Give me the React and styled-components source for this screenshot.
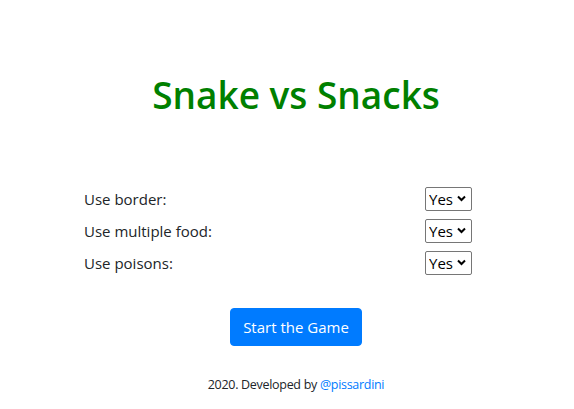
import React from "react";
import styled, { createGlobalStyle } from "styled-components";

const Global = createGlobalStyle`
  html, body { margin: 0; padding: 0; background: #fff; }
  body {
    font-family: "Open Sans", "Noto Sans", sans-serif;
    color: #212529;
    font-size: 16px;
    line-height: 1.5;
  }
`;

const Page = styled.div`
  width: 574px;
  height: 409px;
  display: flex;
  flex-direction: column;
  padding-left: 18px;
  box-sizing: border-box;
`;

const Title = styled.h1`
  margin: 71px 0 0;
  text-align: center;
  color: #008000;
  font-size: 37px;
  font-weight: 600;
  line-height: 48px;
`;

const Form = styled.div`
  margin: 64px 0 0 66px;
  width: 388px;
  display: flex;
  flex-direction: column;
`;

const Row = styled.div`
  height: 32px;
  display: flex;
  align-items: center;
  justify-content: space-between;
`;

const Label = styled.label`
  font-size: 15px;
`;

const SelectWrap = styled.span`
  position: relative;
  display: inline-flex;
`;

const Select = styled.select`
  appearance: none;
  -webkit-appearance: none;
  width: 47px;
  height: 24px;
  box-sizing: border-box;
  border: 1px solid #767676;
  border-radius: 2px;
  background: #fff;
  color: #000;
  font-family: inherit;
  font-size: 15px;
  padding: 0 0 0 3px;
  margin: 0;
  line-height: 22px;
`;

const Chevron = styled.svg`
  position: absolute;
  right: 6px;
  top: 8px;
  pointer-events: none;
`;

const ButtonRow = styled.div`
  margin-top: 29px;
  display: flex;
  justify-content: center;
`;

const Button = styled.button`
  background: #007bff;
  color: #fff;
  border: 1px solid #007bff;
  border-radius: 4px;
  height: 38px;
  width: 132px;
  padding: 0;
  font-family: inherit;
  font-size: 15px;
  cursor: pointer;
`;

const Footer = styled.p`
  margin: 28px 0 0;
  text-align: center;
  font-size: 12.5px;
  letter-spacing: -0.3px;
  line-height: 21px;
`;

const Link = styled.a`
  color: #007bff;
  text-decoration: none;
`;

function YesNo() {
  return (
    <SelectWrap>
      <Select defaultValue="yes">
        <option value="yes">Yes</option>
        <option value="no">No</option>
      </Select>
      <Chevron width="9" height="7" viewBox="0 0 9 7">
        <path d="M1 1.5 L4.5 5 L8 1.5" fill="none" stroke="#000" strokeWidth="2" />
      </Chevron>
    </SelectWrap>
  );
}

export default function App() {
  const rows = ["Use border:", "Use multiple food:", "Use poisons:"];
  return (
    <>
      <Global />
      <Page>
        <Title>Snake vs Snacks</Title>
        <Form>
          {rows.map((r) => (
            <Row key={r}>
              <Label>{r}</Label>
              <YesNo />
            </Row>
          ))}
        </Form>
        <ButtonRow>
          <Button>Start the Game</Button>
        </ButtonRow>
        <Footer>
          2020. Developed by <Link href="#">@pissardini</Link>
        </Footer>
      </Page>
    </>
  );
}
